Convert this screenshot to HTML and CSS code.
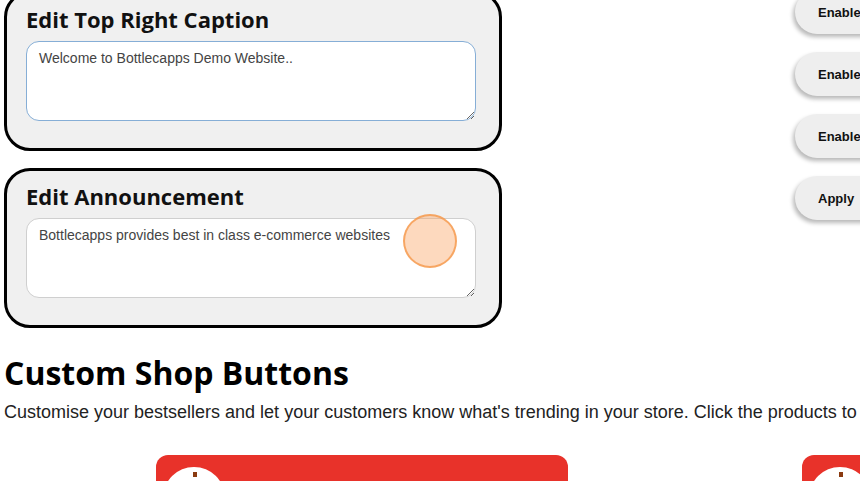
FILE: index.html
```html
<!DOCTYPE html>
<html>
<head>
<meta charset="utf-8">
<link rel="stylesheet" href="styles.css">
</head>
<body>
<div class="page">
  <div class="top">
    <div class="editors">
      <section class="panel">
        <h2 class="panel-title">Edit Top Right Caption</h2>
        <textarea class="field field-focus">Welcome to Bottlecapps Demo Website..</textarea>
      </section>
      <section class="panel">
        <h2 class="panel-title">Edit Announcement</h2>
        <textarea class="field">Bottlecapps provides best in class e-commerce websites</textarea>
      </section>
    </div>
    <div class="actions">
      <button class="pill">Enable</button>
      <button class="pill">Enable</button>
      <button class="pill">Enable</button>
      <button class="pill">Apply</button>
    </div>
  </div>
  <h1 class="section-title">Custom Shop Buttons</h1>
  <p class="section-text">Customise your bestsellers and let your customers know what's trending in your store. Click the products to</p>
  <div class="cards">
    <div class="shop-card"><span class="badge"><span class="dot"></span></span></div>
    <div class="shop-card"><span class="badge"><span class="dot"></span></span></div>
  </div>
</div>
<div class="click-mark"></div>
</body>
</html>
```
FILE: styles.css
```css
html, body {
  margin: 0;
  padding: 0;
  background: #ffffff;
  overflow: hidden;
}
body {
  width: 860px;
  height: 481px;
  font-family: "Liberation Sans", Arial, sans-serif;
  color: #111;
}
.page {
  margin-top: -9px;
  padding-left: 4px;
}
.top {
  display: flex;
  align-items: flex-start;
}
.editors {
  display: flex;
  flex-direction: column;
  gap: 17px;
  width: 498px;
}
.panel {
  box-sizing: border-box;
  width: 498px;
  border: 3px solid #000;
  border-radius: 26px;
  background: #f0f0f0;
  padding: 12px 23px 27px 19px;
  display: flex;
  flex-direction: column;
}
.panel-title {
  margin: 0 0 7px 0;
  font-family: "Open Sans", sans-serif;
  font-weight: 700;
  font-size: 22px;
  line-height: 27px;
  color: #111;
}
.field {
  box-sizing: border-box;
  display: block;
  width: 450px;
  height: 80px;
  margin: 1px 0 0 0;
  padding: 8px 12px;
  border: 1px solid #cfcfcf;
  border-radius: 13px;
  background: #fff;
  font-family: "Liberation Sans", Arial, sans-serif;
  font-size: 14px;
  line-height: 16px;
  color: #444;
  outline: none;
}
.field-focus {
  border-color: #86aed6;
}
.actions {
  margin-left: 293px;
  margin-top: -1px;
  display: flex;
  flex-direction: column;
  gap: 18px;
}
.pill {
  box-sizing: border-box;
  width: 120px;
  height: 44px;
  border: none;
  border-radius: 22px;
  background: #eeeeee;
  box-shadow: -2px 3px 4px rgba(0, 0, 0, 0.28);
  padding: 0 0 0 23px;
  text-align: left;
  font-family: "Liberation Sans", Arial, sans-serif;
  font-weight: 700;
  font-size: 13px;
  color: #111;
}
.section-title {
  margin: 25px 0 0 0;
  font-family: "Open Sans", sans-serif;
  font-weight: 700;
  font-size: 32px;
  line-height: 40px;
  color: #000;
}
.section-text {
  margin: 8px 0 0 0;
  font-family: "Liberation Sans", Arial, sans-serif;
  font-size: 18px;
  line-height: 22px;
  color: #222;
  white-space: nowrap;
}
.cards {
  display: flex;
  gap: 234px;
  padding-left: 152px;
  margin-top: 32px;
}
.shop-card {
  flex: none;
  width: 412px;
  height: 80px;
  border-radius: 12px;
  background: #e8322a;
  padding: 12px 0 0 7px;
  box-sizing: border-box;
}
.badge {
  display: block;
  width: 62px;
  height: 62px;
  border-radius: 50%;
  background: #fff;
  position: relative;
}
.dot {
  position: absolute;
  left: 30px;
  top: 5px;
  width: 4px;
  height: 5px;
  background: #8a3a10;
}
.click-mark {
  position: absolute;
  left: 403px;
  top: 214px;
  width: 50px;
  height: 50px;
  border-radius: 50%;
  border: 2px solid rgba(246, 150, 70, 0.75);
  background: rgba(251, 165, 100, 0.42);
}
```
